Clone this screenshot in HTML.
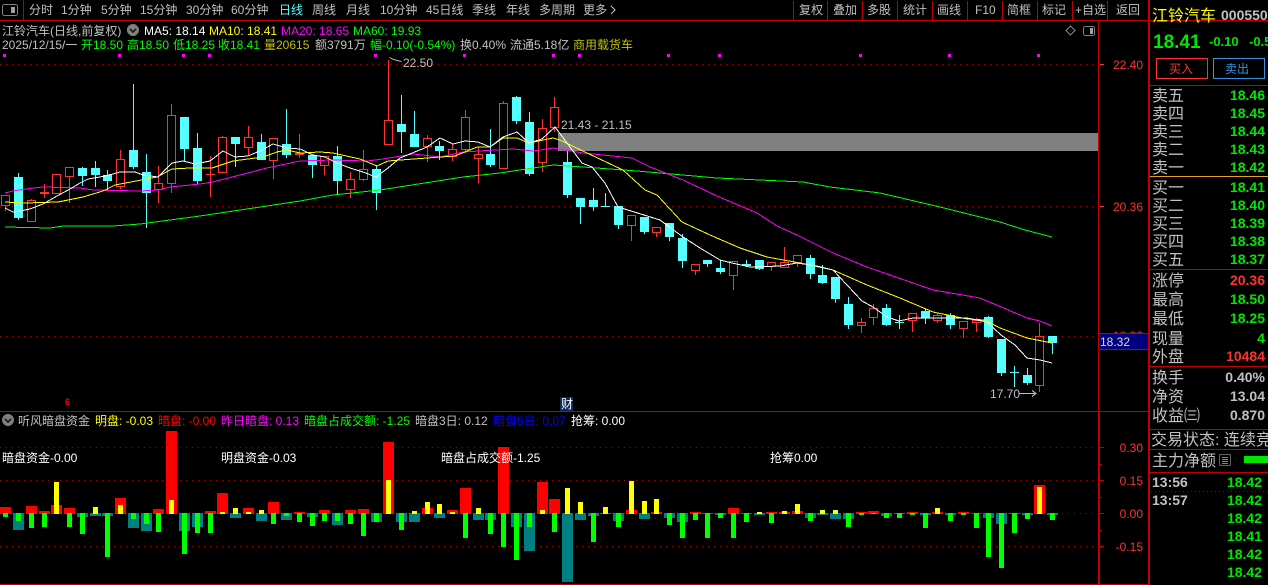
<!DOCTYPE html>
<html><head><meta charset="utf-8">
<style>
html,body{margin:0;padding:0;background:#000;width:1268px;height:585px;overflow:hidden}
svg{display:block;position:absolute;left:0;top:0}
text{font-family:"Liberation Sans","WenQuanYi Zen Hei","Noto Sans CJK SC",sans-serif;font-size:12px;fill:#c0c0c0;white-space:pre}
.g{fill:#00e600}.r{fill:#ff3232}.y{fill:#ffff00}.m{fill:#ff00ff}.w{fill:#fff}.o{fill:#c0c000}.l{fill:#00ff00}
.p{font-size:16px}
.v{font-size:14px;font-weight:bold;text-anchor:end}
.a{fill:#ff3232;text-anchor:end}
</style></head><body>
<svg width="1268" height="585" viewBox="0 0 1268 585" xmlns="http://www.w3.org/2000/svg" shape-rendering="crispEdges">
<!-- dotted grid -->
<g stroke="#a00000" stroke-width="1" stroke-dasharray="1 5" fill="none">
<path d="M0 64.5H1098M0 206.5H1098M0 336.5H1098M0 447.5H1098M0 480.5H1098M0 513.5H1098M0 546.5H1098"/>
<path d="M1151 491.5H1268" stroke-dasharray="1 3"/>
</g>
<!-- frame -->
<g fill="#c00000">
<rect x="0" y="20" width="1268" height="1"/>
<rect x="23" y="0" width="1" height="20"/>
<rect x="793" y="1" width="1" height="19"/><rect x="827" y="1" width="1" height="19"/><rect x="862" y="1" width="1" height="19"/><rect x="897" y="1" width="1" height="19"/><rect x="932" y="1" width="1" height="19"/><rect x="967" y="1" width="1" height="19"/><rect x="1002" y="1" width="1" height="19"/><rect x="1037" y="1" width="1" height="19"/><rect x="1072" y="1" width="1" height="19"/><rect x="1107" y="1" width="1" height="19"/>
<rect x="1098" y="20" width="1" height="391"/>
<rect x="1098" y="411" width="2" height="174"/>
<rect x="1148" y="0" width="2" height="585"/>
<rect x="0" y="411" width="1150" height="1"/>
<rect x="0" y="584" width="1150" height="1"/>
<rect x="1150" y="85" width="118" height="1"/>
<rect x="1150" y="269" width="118" height="1"/>
<rect x="1150" y="366" width="118" height="1"/>
<rect x="1150" y="429" width="118" height="1"/>
<rect x="1150" y="449" width="118" height="1"/>
<rect x="1150" y="472" width="118" height="1"/>
</g>
<rect x="1150" y="176" width="118" height="1" fill="#e8a020"/>
<!-- gray box -->
<rect x="558" y="133" width="540" height="18" fill="#808080"/>
<!-- magenta dots -->
<path fill="#ff00ff" d="M3 54h3v3h-3zM118 54h3v3h-3zM182 54h3v3h-3zM208 54h3v3h-3zM374 54h3v3h-3zM463 54h3v3h-3zM552 54h3v3h-3zM578 54h3v3h-3zM667 54h3v3h-3zM718 54h3v3h-3zM859 54h3v3h-3zM948 54h3v3h-3zM1037 54h3v3h-3z"/>
<!-- cyan candles -->
<path fill="#54ffff" d="M14 177h9v41h-9zM18 173h1v47h-1zM78 168h9v8h-9zM82 167h1v19h-1zM91 168h9v7h-9zM95 161h1v26h-1zM103 175h9v6h-9zM107 170h1v20h-1zM129 150h9v17h-9zM133 84h1v85h-1zM142 172h9v21h-9zM146 154h1v74h-1zM180 117h9v32h-9zM184 117h1v45h-1zM193 148h9v33h-9zM197 133h1v51h-1zM231 137h9v7h-9zM235 137h1v30h-1zM257 142h9v18h-9zM261 134h1v26h-1zM282 144h9v11h-9zM286 109h1v49h-1zM308 155h9v10h-9zM312 155h1v23h-1zM333 156h9v25h-9zM337 146h1v48h-1zM372 169h9v24h-9zM376 165h1v45h-1zM397 124h9v8h-9zM401 95h1v58h-1zM410 134h9v13h-9zM414 111h1v36h-1zM435 146h9v5h-9zM439 141h1v19h-1zM486 154h9v11h-9zM490 129h1v38h-1zM512 97h9v24h-9zM516 96h1v28h-1zM525 122h9v52h-9zM529 112h1v64h-1zM563 162h9v33h-9zM567 151h1v47h-1zM576 198h9v9h-9zM580 198h1v26h-1zM589 200h9v7h-9zM593 188h1v23h-1zM601 206h9v1h-9zM605 193h1v14h-1zM614 206h9v19h-9zM618 206h1v23h-1zM640 217h9v15h-9zM644 217h1v17h-1zM665 223h9v14h-9zM669 223h1v18h-1zM678 238h9v23h-9zM682 234h1v34h-1zM703 260h9v4h-9zM707 260h1v7h-1zM716 268h9v4h-9zM720 260h1v14h-1zM742 264h9v2h-9zM746 260h1v7h-1zM755 260h9v9h-9zM759 260h1v10h-1zM806 258h9v16h-9zM810 255h1v24h-1zM818 275h9v8h-9zM822 265h1v19h-1zM831 277h9v22h-9zM835 277h1v26h-1zM844 304h9v21h-9zM848 297h1v32h-1zM882 308h9v17h-9zM886 304h1v22h-1zM895 322h9v1h-9zM899 315h1v14h-1zM921 311h9v7h-9zM925 309h1v15h-1zM946 315h9v10h-9zM950 313h1v16h-1zM984 317h9v20h-9zM988 316h1v22h-1zM997 339h9v34h-9zM1001 339h1v37h-1zM1010 372h9v1h-9zM1014 366h1v21h-1zM1023 375h9v8h-9zM1027 368h1v17h-1zM1048 336h9v7h-9zM1052 336h1v18h-1z"/>
<!-- red candles -->
<path fill="none" stroke="#ff3232" stroke-width="1" d="M1.5 195.5h8V205.5h-8zM5.5 206V211M27.5 200.5h8V221.5h-8zM31.5 199V200M52.5 174.5h8V193.5h-8zM65.5 167.5h8V176.5h-8zM69.5 177V203M116.5 159.5h8V186.5h-8zM120.5 150V159M120.5 187V189M154.5 183.5h8V189.5h-8zM158.5 166V183M158.5 190V203M167.5 115.5h8V183.5h-8zM171.5 104V115M171.5 184V193M218.5 137.5h8V172.5h-8zM222.5 136V137M244.5 137.5h8V147.5h-8zM248.5 126V137M248.5 148V155M269.5 138.5h8V160.5h-8zM273.5 161V179M320.5 156.5h8V165.5h-8zM324.5 166V175M346.5 179.5h8V189.5h-8zM350.5 172V179M350.5 190V198M359.5 169.5h8V179.5h-8zM363.5 150V169M363.5 180V181M384.5 120.5h8V144.5h-8zM388.5 60V120M423.5 138.5h8V146.5h-8zM427.5 135V138M427.5 147V162M448.5 149.5h8V156.5h-8zM452.5 144V149M452.5 157V161M461.5 117.5h8V149.5h-8zM465.5 110V117M465.5 150V153M474.5 154.5h8V158.5h-8zM478.5 147V154M478.5 159V183M499.5 103.5h8V168.5h-8zM503.5 101V103M538.5 128.5h8V162.5h-8zM542.5 119V128M542.5 163V172M550.5 107.5h8V127.5h-8zM554.5 97V107M554.5 128V132M627.5 215.5h8V225.5h-8zM631.5 226V241M652.5 227.5h8V232.5h-8zM656.5 233V237M691.5 264.5h8V270.5h-8zM695.5 271V275M729.5 261.5h8V275.5h-8zM733.5 276V290M767.5 262.5h8V266.5h-8zM771.5 267V271M780.5 262.5h8V267.5h-8zM784.5 247V262M793.5 255.5h8V262.5h-8zM797.5 263V267M857.5 322.5h8V325.5h-8zM861.5 318V322M861.5 326V333M869.5 308.5h8V317.5h-8zM873.5 304V308M873.5 318V325M908.5 313.5h8V320.5h-8zM912.5 321V332M933.5 315.5h8V320.5h-8zM937.5 313V315M937.5 321V323M959.5 321.5h8V328.5h-8zM963.5 329V338M972.5 320.5h8V322.5h-8zM976.5 318V320M976.5 323V332M1035.5 336.5h8V385.5h-8zM1039.5 323V336M1039.5 386V392"/>
<path fill="#ff3232" d="M40 192h9v2h-9zM44 184h1v14h-1zM206 174h9v1h-9zM210 156h1v41h-1zM295 153h9v2h-9zM299 134h1v24h-1z"/>
<!-- MA lines -->
<g fill="none" stroke-width="1">
<polyline stroke="#00ff00" points="5,227 50,228 63,226 113,226 140,224 200,216 267,206 300,201 333,195 380,190 463,177 500,173 553,165 583,167 637,171 717,178 803,182 830,187 880,193 940,207 1000,222 1025,230 1052,237"/>
<polyline stroke="#ff00ff" points="5,193 13,191 33,188 43,187 80,188 93,190 140,191 158,190 170,187 200,184 213,182 267,168 300,161 333,160 367,161 383,159 413,154 440,157 463,152 513,149 533,151 553,148 583,153 632,158 650,167 683,180 717,196 757,213 777,226 797,235 833,253 867,267 933,290 980,298 1027,318 1040,321 1052,326"/>
<polyline stroke="#ffff00" points="5,202 25,203 58,202 83,197 103,191 115,185 157,177 172,169 190,168 212,168 233,161 263,157 277,152 287,150 300,153 320,152 333,153 360,159 377,166 388,161 427,158 455,156 477,147 490,147 503,138 517,138 529,143 553,138 560,140 587,153 623,170 645,190 657,195 682,222 710,235 740,248 767,257 800,263 833,270 867,285 900,298 933,312 967,319 985,320 1000,328 1027,338 1052,343"/>
<polyline stroke="#ffffff" points="5,208 13,212 20,211 30,209 43,204 57,196 70,189 80,183 88,179 100,177 113,174 120,172 135,172 143,175 158,177 172,163 183,161 195,164 210,161 223,151 235,157 248,156 262,150 273,144 287,148 300,149 313,155 325,157 337,163 350,168 363,172 376,177 388,168 400,158 427,147 440,138 453,144 465,141 478,142 490,147 503,137 517,132 529,143 542,139 555,127 582,163 592,167 605,183 618,207 644,215 660,220 683,237 700,248 720,260 732,263 750,267 780,266 797,263 817,266 833,270 847,285 862,301 873,307 887,317 899,321 913,318 925,318 967,318 987,322 1001,335 1015,345 1027,358 1040,360 1052,363"/>
</g>
<!-- chart annotations -->
<path fill="none" stroke="#c0c0c0" d="M389.5 57.5l4 2l4 1l4 1M1019 393.5H1036M1032 390.5l4 3l-4 3"/>
<text x="403" y="67">22.50</text>
<text x="561" y="129">21.43 - 21.15</text>
<text x="990" y="398">17.70</text>
<!-- bars -->
<path fill="#008080" d="M13 513h11V530h-11zM77 513h11V517h-11zM90 513h11V516h-11zM102 513h11V516h-11zM128 513h11V528h-11zM141 513h11V531h-11zM179 513h11V531h-11zM192 513h11V527h-11zM230 513h11V518h-11zM256 513h11V521h-11zM281 513h11V520h-11zM307 513h11V517h-11zM332 513h11V525h-11zM371 513h11V522h-11zM396 513h11V522h-11zM409 513h11V522h-11zM434 513h11V518h-11zM473 513h11V520h-11zM485 513h11V520h-11zM511 513h11V527h-11zM524 513h11V551h-11zM562 513h11V582h-11zM575 513h11V520h-11zM588 513h11V516h-11zM600 513h11V514h-11zM613 513h11V521h-11zM639 513h11V519h-11zM664 513h11V518h-11zM677 513h11V522h-11zM702 513h11V514h-11zM715 513h11V515h-11zM741 513h11V514h-11zM754 513h11V515h-11zM805 513h11V518h-11zM817 513h11V515h-11zM830 513h11V519h-11zM843 513h11V519h-11zM881 513h11V516h-11zM894 513h11V514h-11zM920 513h11V515h-11zM945 513h11V515h-11zM983 513h11V518h-11zM996 513h11V524h-11zM1009 513h11V514h-11zM1022 513h11V515h-11zM1047 513h11V515h-11z"/>
<path fill="#ff0000" d="M0 507h11V514h-11zM26 506h11V514h-11zM39 511h11V514h-11zM51 505h11V514h-11zM64 508h11V514h-11zM115 498h11V514h-11zM153 509h11V514h-11zM166 431h11V514h-11zM205 511h11V514h-11zM217 493h11V514h-11zM243 508h11V514h-11zM268 502h11V514h-11zM294 512h11V514h-11zM319 510h11V514h-11zM345 510h11V514h-11zM358 509h11V514h-11zM383 442h11V514h-11zM422 508h11V514h-11zM447 510h11V514h-11zM460 488h11V514h-11zM498 447h11V514h-11zM537 482h11V514h-11zM549 499h11V514h-11zM626 510h11V514h-11zM651 512h11V514h-11zM690 512h11V514h-11zM728 508h11V514h-11zM766 512h11V514h-11zM779 512h11V514h-11zM792 511h11V514h-11zM856 512h11V514h-11zM868 511h11V514h-11zM907 512h11V514h-11zM932 512h11V514h-11zM958 512h11V514h-11zM971 513h11V514h-11zM1034 485h11V514h-11z"/>
<path fill="#ffff00" d="M54 482h5V514h-5zM93 507h5V514h-5zM118 505h5V514h-5zM169 500h5V514h-5zM220 512h5V514h-5zM233 508h5V514h-5zM246 512h5V514h-5zM259 510h5V514h-5zM386 480h5V514h-5zM412 511h5V514h-5zM425 502h5V514h-5zM437 504h5V514h-5zM450 512h5V514h-5zM476 508h5V514h-5zM540 510h5V514h-5zM565 488h5V514h-5zM578 502h5V514h-5zM603 507h5V514h-5zM629 481h5V514h-5zM642 501h5V514h-5zM654 499h5V514h-5zM757 512h5V514h-5zM782 511h5V514h-5zM795 504h5V514h-5zM820 510h5V514h-5zM833 510h5V514h-5zM935 508h5V514h-5zM1037 487h5V514h-5z"/>
<path fill="#00ff00" d="M3 513h5V517h-5zM16 513h5V521h-5zM29 513h5V528h-5zM42 513h5V527h-5zM67 513h5V527h-5zM80 513h5V534h-5zM105 513h5V557h-5zM131 513h5V519h-5zM144 513h5V524h-5zM156 513h5V532h-5zM182 513h5V554h-5zM195 513h5V533h-5zM208 513h5V533h-5zM271 513h5V524h-5zM284 513h5V516h-5zM297 513h5V522h-5zM310 513h5V526h-5zM322 513h5V521h-5zM335 513h5V521h-5zM348 513h5V524h-5zM361 513h5V536h-5zM374 513h5V522h-5zM399 513h5V530h-5zM463 513h5V538h-5zM488 513h5V534h-5zM501 513h5V547h-5zM514 513h5V560h-5zM527 513h5V527h-5zM552 513h5V532h-5zM591 513h5V542h-5zM616 513h5V527h-5zM667 513h5V525h-5zM680 513h5V538h-5zM693 513h5V520h-5zM705 513h5V538h-5zM718 513h5V518h-5zM731 513h5V538h-5zM744 513h5V522h-5zM769 513h5V523h-5zM808 513h5V521h-5zM846 513h5V527h-5zM859 513h5V515h-5zM871 513h5V514h-5zM884 513h5V518h-5zM897 513h5V518h-5zM910 513h5V515h-5zM923 513h5V528h-5zM948 513h5V521h-5zM961 513h5V515h-5zM974 513h5V528h-5zM986 513h5V557h-5zM999 513h5V568h-5zM1012 513h5V533h-5zM1025 513h5V519h-5zM1050 513h5V520h-5z"/>
<!-- axis ticks -->
<path fill="#ff3232" d="M1100 64h4v1h-4zM1100 206h4v1h-4z"/>
<path fill="#c00000" d="M1100 447h4v1h-4zM1100 480h4v1h-4zM1100 513h4v1h-4zM1100 546h4v1h-4zM1100 464h2v1h-2zM1100 497h2v1h-2zM1100 530h2v1h-2z"/>
<text class="a" x="1143" y="69">22.40</text>
<text class="a" x="1143" y="211">20.36</text>
<text class="a" x="1143" y="340">18.32</text>
<rect x="1100" y="333" width="48" height="16" fill="#000080"/>
<path fill="#c00000" d="M1099 333h49v1h-49zM1099 349h49v1h-49z"/>
<text x="1100" y="346" style="fill:#d8d8d8">18.32</text>
<text class="a" x="1143" y="452">0.30</text>
<text class="a" x="1143" y="485">0.15</text>
<text class="a" x="1143" y="518">0.00</text>
<text class="a" x="1143" y="551">-0.15</text>
<!-- markers -->
<rect x="560" y="397" width="13" height="14" fill="#0a2a5a"/>
<text x="561" y="408" class="w">财</text>
<text x="65" y="405" style="fill:#ff0000;font-size:9px;font-weight:bold">6</text>
<!-- toolbar -->
<rect x="2.5" y="4.5" width="15" height="11" rx="2" fill="none" stroke="#808080"/>
<rect x="11" y="7" width="4" height="6" fill="#a0a0a0"/>
<text x="29" y="14">分时</text><text x="61" y="14">1分钟</text><text x="101" y="14">5分钟</text><text x="140" y="14">15分钟</text><text x="186" y="14">30分钟</text><text x="231" y="14">60分钟</text><text x="279" y="14" style="fill:#54ffff">日线</text><text x="312" y="14">周线</text><text x="346" y="14">月线</text><text x="380" y="14">10分钟</text><text x="426" y="14">45日线</text><text x="472" y="14">季线</text><text x="506" y="14">年线</text><text x="539" y="14">多周期</text><text x="583" y="14">更多</text>
<path fill="none" stroke="#c0c0c0" d="M611 6l4 4l-4 4"/>
<text x="799" y="14">复权</text><text x="833" y="14">叠加</text><text x="867" y="14">多股</text><text x="903" y="14">统计</text><text x="937" y="14">画线</text><text x="975" y="14">F10</text><text x="1007" y="14">简框</text><text x="1042" y="14">标记</text><text x="1075" y="14">+自选</text><text x="1116" y="14">返回</text>
<!-- header rows -->
<text x="2" y="35">江铃汽车(日线,前复权)</text>
<circle cx="133" cy="30" r="6" fill="#808080"/>
<path fill="none" stroke="#202020" stroke-width="1.5" d="M130 29l3 3l3-3"/>
<text x="144" y="35" class="w">MA5: 18.14</text>
<text x="209" y="35" class="y">MA10: 18.41</text>
<text x="281" y="35" class="m">MA20: 18.65</text>
<text x="353" y="35" class="l">MA60: 19.93</text>
<text x="2" y="49">2025/12/15/一</text>
<text x="81" y="49" class="l">开18.50</text>
<text x="127" y="49" class="l">高18.50</text>
<text x="173" y="49" class="l">低18.25</text>
<text x="218" y="49" class="l">收18.41</text>
<text x="264" y="49" class="o">量20615</text>
<text x="315" y="49">额3791万</text>
<text x="370" y="49" class="l">幅-0.10(-0.54%)</text>
<text x="460" y="49">换0.40%</text>
<text x="510" y="49">流通5.18亿</text>
<text x="573" y="49" class="o">商用载货车</text>
<path fill="none" stroke="#808080" d="M1070.5 26l4.5 4.5l-4.5 4.5l-4.5-4.5z"/>
<rect x="1083.5" y="26.5" width="11" height="9" rx="2" fill="none" stroke="#808080"/>
<rect x="1090" y="28" width="3" height="6" fill="#a0a0a0"/>
<!-- indicator header -->
<circle cx="8" cy="420" r="6" fill="#808080"/>
<path fill="none" stroke="#202020" stroke-width="1.5" d="M5 419l3 3l3-3"/>
<text x="18" y="425">听风暗盘资金</text>
<text x="95" y="425" class="y">明盘: -0.03</text>
<text x="158" y="425" style="fill:#ff0000">暗盘: -0.00</text>
<text x="221" y="425" class="m">昨日暗盘: 0.13</text>
<text x="304" y="425" class="l">暗盘占成交额: -1.25</text>
<text x="415" y="425">暗盘3日: 0.12</text>
<text x="493" y="425" style="fill:#0000ff">暗盘5日: 0.07</text>
<text x="571" y="425" class="w">抢筹: 0.00</text>
<text x="2" y="462" class="w">暗盘资金-0.00</text>
<text x="221" y="462" class="w">明盘资金-0.03</text>
<text x="441" y="462" class="w">暗盘占成交额-1.25</text>
<text x="770" y="462" class="w">抢筹0.00</text>
<!-- right panel -->
<text x="1152" y="21" class="p" style="fill:#ffff00">江铃汽车</text>
<text x="1221" y="20" style="font-size:14px;font-weight:bold">000550</text>
<text x="1153" y="48" class="g" style="font-size:19px;font-weight:bold">18.41</text>
<text x="1209" y="46" class="g" style="font-size:13px;font-weight:bold">-0.10</text>
<text x="1249" y="46" class="g" style="font-size:13px;font-weight:bold">-0.54%</text>
<rect x="1156.5" y="58.5" width="51" height="20" fill="none" stroke="#ff3232"/>
<rect x="1213.5" y="58.5" width="51" height="20" fill="none" stroke="#3a90e0"/>
<text x="1169" y="73" class="r" style="font-size:12px">买入</text>
<text x="1225" y="73" style="font-size:12px;fill:#3a90e0">卖出</text>
<g class="p">
<text class="p" x="1152" y="101">卖五</text><text class="p" x="1152" y="119">卖四</text><text class="p" x="1152" y="137">卖三</text><text class="p" x="1152" y="155">卖二</text><text class="p" x="1152" y="173">卖一</text>
<text class="p" x="1152" y="193">买一</text><text class="p" x="1152" y="211">买二</text><text class="p" x="1152" y="229">买三</text><text class="p" x="1152" y="247">买四</text><text class="p" x="1152" y="265">买五</text>
<text class="p" x="1152" y="286">涨停</text><text class="p" x="1152" y="305">最高</text><text class="p" x="1152" y="324">最低</text><text class="p" x="1152" y="344">现量</text><text class="p" x="1152" y="362">外盘</text>
<text class="p" x="1152" y="383">换手</text><text class="p" x="1152" y="402">净资</text><text class="p" x="1152" y="421">收益㈢</text>
<text class="p" x="1151" y="445">交易状态: 连续竞</text>
<text class="p" x="1152" y="466">主力净额</text>
</g>
<text class="v g" x="1265" y="100">18.46</text><text class="v g" x="1265" y="118">18.45</text><text class="v g" x="1265" y="136">18.44</text><text class="v g" x="1265" y="154">18.43</text><text class="v g" x="1265" y="172">18.42</text>
<text class="v g" x="1265" y="192">18.41</text><text class="v g" x="1265" y="210">18.40</text><text class="v g" x="1265" y="228">18.39</text><text class="v g" x="1265" y="246">18.38</text><text class="v g" x="1265" y="264">18.37</text>
<text class="v r" x="1265" y="285">20.36</text><text class="v g" x="1265" y="304">18.50</text><text class="v g" x="1265" y="323">18.25</text><text class="v g" x="1265" y="343">4</text><text class="v r" x="1265" y="361">10484</text>
<text class="v" x="1265" y="382">0.40%</text><text class="v" x="1265" y="401">13.04</text><text class="v" x="1265" y="420">0.870</text>
<rect x="1219.5" y="454.5" width="11" height="11" rx="1" fill="none" stroke="#606060"/>
<path fill="#808080" d="M1222 457h6v1h-6zM1222 459h6v1h-6zM1222 461h6v1h-6zM1222 463h6v1h-6z"/>
<rect x="1244" y="456" width="24" height="7" fill="#00e600"/>
<text x="1152" y="487" style="font-size:14px;font-weight:bold">13:56</text>
<text x="1152" y="505" style="font-size:14px;font-weight:bold">13:57</text>
<text class="v g" x="1262" y="487">18.42</text><text class="v g" x="1262" y="505">18.42</text><text class="v g" x="1262" y="523">18.42</text><text class="v g" x="1262" y="541">18.41</text><text class="v g" x="1262" y="559">18.42</text><text class="v g" x="1262" y="577">18.42</text>
</svg>
</body></html>
